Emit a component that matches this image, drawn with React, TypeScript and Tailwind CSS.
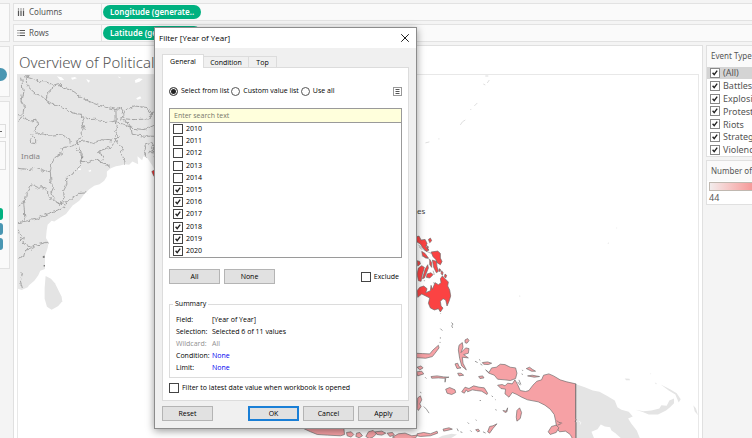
import React, { useState } from 'react';
import { X } from 'lucide-react';

const eventTypes = ['(All)', 'Battles', 'Explosi', 'Protest', 'Riots', 'Strateg', 'Violenc'];

const years = ['2010', '2011', '2012', '2013', '2014', '2015', '2016', '2017', '2018', '2019', '2020'];

const summary = [
  { label: 'Field:', value: '[Year of Year]', color: '' },
  { label: 'Selection:', value: 'Selected 6 of 11 values', color: '' },
  { label: 'Wildcard:', value: 'All', color: 'text-[#909090]', muted: true },
  { label: 'Condition:', value: 'None', color: 'text-[#0000f0]' },
  { label: 'Limit:', value: 'None', color: 'text-[#0000f0]' },
];

type CheckProps = {
  label: string;
  checked?: boolean;
  className?: string;
  box?: string;
  onChange?: () => void;
};

const Check = ({ label, checked = false, className = '', box = 'border-[#444]', onChange = () => {} }: CheckProps) => (
  <label className={`flex items-center gap-[3px] whitespace-nowrap ${className}`}>
    <span className="grid shrink-0">
      <input
        type="checkbox"
        checked={checked}
        onChange={onChange}
        className={`col-start-1 row-start-1 size-[10px] appearance-none border bg-white ${box}`}
      />
      {checked && (
        <svg viewBox="0 0 10 10" className="pointer-events-none col-start-1 row-start-1 size-[10px]" fill="none" stroke="#222" strokeWidth="1.4">
          <path d="M2.6 4.8 L4.2 6.6 L7.2 2.6" />
        </svg>
      )}
    </span>
    {label}
  </label>
);

const DialogButton = ({ children, primary = false }: { children: React.ReactNode; primary?: boolean }) => (
  <button
    className={`h-[15px] w-[51px] bg-[#e1e1e1] leading-none ${primary ? 'border-2 border-[#1a7fd6]' : 'border border-[#b4b4b4]'}`}
  >
    {children}
  </button>
);

const Shelf = ({ name, pill, icon }: { name: string; pill: string; icon: React.ReactNode }) => (
  <div className="flex h-[18px] items-center border border-r-0 border-[#e2e2e2] bg-[#fafafa]">
    <div className="flex h-full w-[88px] shrink-0 items-center gap-1 border-r border-[#e2e2e2] pl-[3px] text-[8px] text-[#555]">
      {icon}
      {name}
    </div>
    <span className="ml-px flex h-[14px] w-[98px] items-center rounded-full bg-[#00b180] pl-[7px] text-[8px] font-semibold whitespace-nowrap text-white">
      {pill}
    </span>
  </div>
);

const WorldMap = () => (
  <svg viewBox="17 74 681 364" className="block h-auto w-full">
    <defs>
      <filter id="jagged" x="-5%" y="-5%" width="110%" height="110%" colorInterpolationFilters="sRGB">
        <feTurbulence type="fractalNoise" baseFrequency="0.08" numOctaves="2" seed="4" />
        <feDisplacementMap in="SourceGraphic" scale="14" xChannelSelector="R" yChannelSelector="G" />
      </filter>
    </defs>

    {/* South Asia */}
    <g transform="translate(0 50) scale(0.33333)">
      <path
        fill="#e6e6e6"
        d="M51 72H480V360L463 362 455 345 440 322 428 316 424 328 410 316 412 340 395 332 385 342 372 340 358 344 345 346 330 352 318 362 318 376 310 390 296 400 280 405 265 415 250 430 235 450 215 464 195 490 178 500 160 512 152 510 140 522 137 540 135 562 143 575 140 592 132 615 132 655 118 660 112 674 100 690 84 704 80 710 62 718 51 714Z"
      />
      <path fill="#e4e4e4" d="M134 676L150 684 162 698 172 718 182 738 184 752 172 766 152 777 138 768 131 744 131 712Z" />
      <g fill="#fff">
        <path d="M168 76l14 3 8 8-12 1zM210 80l12-2 6 4-14 4zM402 88l12-6 12 2-10 8-12 4zM406 142l12-6 4 6-12 4zM256 84l12 5-6 6zM232 353l8 0 0 4-8 1zM262 360l8-3 1 4-6 2zM352 76l10 6-8-2z" />
      </g>
      <g fill="none" stroke="#8a8a8a" strokeWidth="2.2" filter="url(#jagged)">
        <path d="M72 74L92 80 116 92 140 93 157 103 172 98 188 112 206 116 222 124 240 140 262 150 280 158 310 168 345 175 346 210 320 215 300 211 280 205 264 206 240 190 222 188 200 180 180 168 160 162 135 148 139 128 152 118 157 103" />
        <path d="M78 76L76 96 84 110 104 128 120 134 135 148" />
        <path d="M62 80L66 120 60 150 70 165 66 190 74 204 90 210 108 208 110 226 100 242 104 250 120 248 150 256 184 252 206 264 210 286" />
        <path d="M92 250L104 264 104 278 92 276 90 262" />
        <path d="M240 190L250 204 244 216 250 234 240 246 246 258 226 268 230 278" />
        <path d="M228 274L250 270 278 278 300 266 330 270 344 256" />
        <path d="M346 176L360 170 366 180 360 206 382 216 390 228" />
        <path d="M366 196L376 176 400 165 440 170 452 186 448 204 400 206 372 204Z" />
        <path d="M346 210L350 232 340 240 352 258 344 266 356 280 366 290 360 306 368 322 370 342" />
        <path d="M350 214L390 228 394 250 430 256 462 256M392 232L430 236 446 230 462 222M450 190L464 184" />
        <path d="M210 286L180 292 186 304 160 322 152 340 148 362 150 390 158 410 150 426 164 448 176 460 190 440 188 420 198 400 196 380 216 366 232 352 244 330 240 310 226 292" />
        <path d="M51 352L80 356 104 352 130 362 148 358" />
        <path d="M210 286L228 276 244 310 240 330 262 336 284 326 300 334 316 340 330 352" />
        <path d="M300 334L308 316 290 302 330 288 346 270" />
        <path d="M176 460L200 452 214 440 232 428 256 426M51 470L66 452 74 446 76 428 92 402 112 412 134 410 146 440 160 450 176 460" />
        <path d="M68 452L70 480 72 510M51 516L80 510 110 504 140 488 170 478 190 466 200 454" />
        <path d="M51 540L60 560 54 570 70 560 66 574 90 590 110 582 140 574M51 622L68 618 72 600 98 592M56 660L64 670 58 690 64 712" />
        <path d="M440 322L428 300 432 284 452 276 460 290 446 310M452 290L462 320M51 216L62 200 51 186" />
      </g>
      <path fill="#e33" stroke="#555" strokeWidth="1.5" d="M453 362l6-4 5 6 0 18-6-8z" />
      <path fill="#777" d="M125 617l5-3 2 6-6 2zM128 643l4 0 0 4-4 0z" />
    </g>

    {/* Philippines, Indonesia and Papua */}
    <g transform="translate(410 210) scale(0.33333)" stroke="#6b6b6b" strokeWidth="2" strokeLinejoin="round">
      <g fill="#fb4343">
        <path d="M16 78L26 76 32 88 44 86 50 98 46 108 56 118 48 122 36 110 30 100 20 94ZM54 86l6-4 4 8-6 6zM48 104l6 4-2 8z" />
        <path d="M62 124L82 121 90 128 90 142 95 152 90 162 80 156 76 146 68 138ZM66 148L78 152 80 168 84 182 78 186 70 170ZM34 122l10 6 10 14-8 0-10-8z" />
        <path d="M20 150l8 2 2 8-8 6zM24 172L34 165 42 170 36 190 32 212 24 210 20 190ZM44 176L52 162 54 172 42 202 36 204ZM50 190L62 186 68 192 58 202 48 200Z" />
        <path d="M94 180l4 6-2 8-4-6zM104 190l5 4-3 8-4-4zM58 146l6 10 0 14-6-8zM86 174l4 2 0 6-4 0z" />
        <path d="M20 240L28 230 40 226 50 234 46 246 60 240 62 224 66 236 74 216 84 222 92 216 90 204 96 196 104 204 114 214 112 226 118 238 121 256 116 272 110 286 106 268 98 264 90 272 92 286 98 292 90 304 84 294 72 298 60 292 54 278 58 262 46 256 34 250 22 260Z" />
      </g>
      <path fill="none" strokeWidth="1.5" d="M24 102L40 118 62 128M34 136l12 4 12 6M26 108l8 8M70 214l2 6M40 210l4 0M90 308l2 2M68 180l4 12" />

      <g fill="#f6a1a5">
        <path d="M14 428L36 429 58 430 68 418 84 404 86 412 74 428 66 438 46 443 14 441Z" />
        <path d="M164 388l8-4 4 6-6 8-6-2zM144 418L146 404 156 396 158 410 152 426 166 412 176 414 174 428 160 432 174 442 156 440 158 458 168 478 154 466 148 444Z" />
        <path d="M134 460l8-2 4 10 6 4-12 2zM142 488l10 0 8 6-14 2zM205 498l12-2 4 6-12 2zM216 456l16-2 12 4-10 4-14-1z" />
        <path d="M20 470l12-4 6 6-10 6zM18 484l16-2 6 8-18 6zM62 498L80 496 100 499 116 500 100 503 84 502 64 503ZM104 503l0 12 2-10z" />
        <path d="M106 536L118 531 134 538 136 546 124 552 110 548ZM154 544L164 530 176 534 190 526 206 530 222 532 232 548 230 552 214 542 198 540 186 538 172 544 168 538 162 548Z" />
        <path d="M226 478L236 486 244 472 258 470 270 461 284 462 300 470 316 472 320 488 316 504 300 510 284 508 262 506 252 494 236 488Z" />
        <path d="M262 524L276 522 284 526 292 518 306 520 314 508 322 522 330 540 346 543 356 540 368 524 380 512 394 508 400 494 416 490 430 496 450 508 470 514 497 520V690H490L480 672 466 662 448 664 440 654 436 630 432 612 420 596 404 584 384 574 352 568 334 560 320 552 306 546 296 560 284 550 286 536 272 534Z" />
        <path d="M414 664L424 648 438 644 446 652 438 666 420 672ZM318 620L320 600 328 592 334 606 330 624 320 632ZM348 474L358 470 366 476 376 482 364 482ZM352 496L366 494 388 498 372 500Z" />
        <path d="M22 562l8-6 4 12-6 12 4 8-8 12-4-6zM232 664L238 648 248 646 260 640 248 654 238 668ZM98 656L116 652 126 656 110 660 100 662ZM278 600l10 2 4-10-2 12-6 2z" />
        <path d="M20 670L40 666 60 670 80 662 82 668 60 676 30 678 20 676ZM196 658l8-2 4 6-6 2z" />
        {/* Java and the Lesser Sunda Islands */}
        <path d="M-330 650L-290 654 -250 654 -200 654 -198 672 -210 676 -250 674 -280 672 -300 664Z" />
        <path d="M-192 666l14-2 8 8-8 8-12-4zM-162 668l10-2 8 10-10 6-10-4zM-134 678l8-14 14-4 10 10-10 10-12 4zM-106 664l20-2 12 6-12 6-14-2zM-70 668l16-2 6 8-14 4zM-54 680L-36 670 -16 668 4 676 20 674 16 682 -10 686 -40 686Z" />
      </g>
      <path
        fill="none"
        strokeWidth="2"
        d="M123 336l5 4-4 6 3 6M90 354l6 6M90 380v4M89 394v3M194 452l8 4M206 446l4 4M210 460l6 4M336 478l2 3M334 490l4 2M40 588l8 8 8 12M44 500l4 4M30 544l2 4M140 654l4 8M150 664l6 2M172 636l4 4M180 660l4 4M208 570l4 0M244 556l4 3M256 596l2 4M196 628l3 2M254 566l2 2M218 664l8 4M440 630l6 6 10 2M326 508l6 14M322 514l8 10M442 644l10-4"
      />
      <path strokeWidth="2.5" d="M497 520V625L499 628 495 632 498 636V690" fill="none" />

      <g fill="#e4e4e4" stroke="none">
        <path d="M500 522L524 530 548 540 568 544 590 556 614 570 622 590 634 598 656 604 668 618 654 624 664 640 680 660 692 690H640L616 668 604 660 600 650 584 648 572 642 562 656 544 664 552 684 540 690H500Z" />
        <path d="M676 598L700 602 724 600 748 594 754 584 770 586 778 570 792 564 792 578 780 590 768 600 744 612 716 612 696 604Z" />
        <path d="M752 522L780 536 800 548 812 566 806 576 796 552 776 540ZM644 504l14 1 2 4-12 0zM734 516l6 2-2 4zM720 488l4 2-3 1zM850 584l8 10 6 20-10-12z" />
        <path d="M80 684l16-8 28-6 16 2-16 10-12 4z" />
        <path d="M592 98l5-4-2 6zM618 50l4 2-4 1zM327 254l4 2-3 4z" />
      </g>
      <path fill="none" stroke="#fff" d="M506 632l6 4-2 6" />
    </g>

    {/* Small islands south of Japan */}
    <path fill="none" stroke="#dedede" d="M485 75l3 0M487 82l2-3M483 83l2 1M474 105l3-3M471 108l-1 1M460 124l2-3 3-2M425 142l4-1M438 138l1 0" />

    <text x="20" y="158" className="fill-[#858585] font-['Noto_Sans'] text-[8px]">India</text>
    <text x="425" y="213" textAnchor="end" className="fill-[#444] font-['Noto_Sans'] text-[8px]">Philippines</text>
  </svg>
);

const FilterDialog = () => {
  const [selected, setSelected] = useState(years.slice(5));
  const [mode, setMode] = useState('Select from list');

  const toggle = (year: string) =>
    setSelected(selected.includes(year) ? selected.filter((y) => y !== year) : [...selected, year]);

  return (
    <div
      role="dialog"
      aria-label="Filter [Year of Year]"
      className="absolute top-[27px] left-[154px] flex w-[263px] flex-col border border-[#8c8c8c] bg-[#f0f0f0] font-['Open_Sans',sans-serif] text-[7px] leading-[12px] font-medium text-black shadow-[0_2px_8px_rgba(0,0,0,0.4)]"
    >
      <div className="flex h-[20px] items-center justify-between bg-white pr-1 pl-1 text-[8px] font-normal">
        Filter [Year of Year]
        <button aria-label="Close">
          <X size={14} strokeWidth={1.5} />
        </button>
      </div>

      <div className="px-[7px] pt-[7px]">
        <div role="tablist" className="flex h-[12px] items-end">
          <button role="tab" aria-selected="true" className="z-10 -mb-px h-[14px] w-[42px] border border-b-0 border-[#dcdcdc] bg-white leading-none">General</button>
          <button role="tab" aria-selected="false" className="h-[11px] w-[45px] border border-b-0 border-l-0 border-[#dcdcdc] leading-none">Condition</button>
          <button role="tab" aria-selected="false" className="h-[11px] w-[28px] border border-b-0 border-l-0 border-[#dcdcdc] leading-none">Top</button>
        </div>

        <div className="flex flex-col border border-[#dcdcdc] bg-white px-[6px] pt-[17px] pb-[6px]">
          <div className="flex h-[12px] items-center gap-[2px]">
            {['Select from list', 'Custom value list', 'Use all'].map((name) => (
              <label key={name} className="flex items-center gap-[3px] whitespace-nowrap">
                <input
                  type="radio"
                  name="mode"
                  checked={mode === name}
                  onChange={() => setMode(name)}
                  className="size-[9px] appearance-none rounded-full border border-[#555] bg-white checked:bg-[#222] checked:shadow-[inset_0_0_0_1px_white]"
                />
                {name}
              </label>
            ))}
            <button aria-label="List options" className="ml-auto border border-[#999] bg-white">
              <svg viewBox="0 0 7 7" className="size-[7px]" stroke="#555">
                <path d="M1.500 1.500H5.500M1.500 3.500H5.500M1.500 5.500H5.500" />
              </svg>
            </button>
          </div>

          <input
            type="text"
            aria-label="Search"
            placeholder="Enter search text"
            className="mt-[11px] h-[15px] border border-[#9a9a9a] bg-[#ffffdc] px-1 placeholder:text-[#77776a]"
          />
          <div className="flex h-[135px] flex-col justify-between border border-t-0 border-[#9a9a9a] pl-[3px]">
            {years.map((year) => (
              <Check key={year} label={year} checked={selected.includes(year)} onChange={() => toggle(year)} />
            ))}
          </div>

          <div className="mt-[11px] flex items-center gap-1">
            <DialogButton>All</DialogButton>
            <DialogButton>None</DialogButton>
            <Check label="Exclude" className="ml-auto pr-[3px]" />
          </div>

          <fieldset className="mt-[14px] border border-[#dcdcdc] px-[6px] pb-[3px]">
            <legend className="-ml-[3px] px-[2px]">Summary</legend>
            <dl className="grid grid-cols-[36px_1fr] pt-1">
              {summary.map((row) => (
                <React.Fragment key={row.label}>
                  <dt className={row.muted ? 'text-[#909090]' : ''}>{row.label}</dt>
                  <dd className={row.color}>{row.value}</dd>
                </React.Fragment>
              ))}
            </dl>
          </fieldset>

          <Check label="Filter to latest date value when workbook is opened" className="mt-1" />
        </div>
      </div>

      <div className="flex gap-1 px-[7px] pt-[5px] pb-[7px]">
        <DialogButton>Reset</DialogButton>
        <div className="ml-auto flex gap-1">
          <DialogButton primary>OK</DialogButton>
          <DialogButton>Cancel</DialogButton>
          <DialogButton>Apply</DialogButton>
        </div>
      </div>
    </div>
  );
};

const App = () => {
  return (
    <div className="relative flex min-h-screen overflow-hidden bg-[#f4f4f4] pt-[3px] font-['Noto_Sans',sans-serif] text-[#555]">
      {/* Edge of the pages / filters / marks cards */}
      <aside className="mr-[3px] flex w-[10px] shrink-0 flex-col gap-1 overflow-hidden">
        <div className="h-[39px] border border-l-0 border-[#e2e2e2] bg-[#fafafa]"></div>
        <div className="flex h-[51px] items-center border border-l-0 border-[#e2e2e2] bg-[#fafafa] pt-[5px]">
          <div className="h-[13px] w-[7px] rounded-r-full bg-[#4996b2]"></div>
        </div>
        <div className="flex h-[168px] flex-col border border-l-0 border-[#e2e2e2] bg-[#fafafa] pt-[22px]">
          <div className="flex h-[14px] w-[6px] items-center border border-l-0 border-[#dedede]">
            <div className="h-px w-[2px] bg-[#666]"></div>
          </div>
          <div className="mt-[3px] h-[29px] w-[6px] border border-l-0 border-[#dedede]"></div>
          <div className="mt-[38px] flex flex-col gap-[3px]">
            <div className="h-3 w-[3px] rounded-r-full bg-[#00b180]"></div>
            <div className="h-3 w-[3px] rounded-r-full bg-[#4996b2]"></div>
            <div className="h-3 w-[3px] rounded-r-full bg-[#4996b2]"></div>
          </div>
        </div>
      </aside>

      <main className="flex min-w-0 flex-1 flex-col">
        <div className="flex flex-col gap-[3px]">
          <Shelf
            name="Columns"
            pill="Longitude (generate.."
            icon={
              <svg viewBox="0 0 8 8" className="size-[8px]" stroke="#555" strokeWidth="1.2">
                <path d="M1.500 2.500V8M4 2.500V8M6.500 2.500V8M1.500 0.500V1.500M4 0.500V1.500M6.500 0.500V1.500" />
              </svg>
            }
          />
          <Shelf
            name="Rows"
            pill="Latitude (generate.."
            icon={
              <svg viewBox="0 0 8 8" className="size-[8px]" stroke="#555" strokeWidth="1.2">
                <path d="M2.500 1.500H8M2.500 4H8M2.500 6.500H8M0.500 1.500H1.500M0.500 4H1.500M0.500 6.500H1.500" />
              </svg>
            }
          />
        </div>

        <div className="mt-[3px] flex flex-1">
          <section className="min-w-0 flex-1 border border-b-0 border-[#e0e0e0] bg-white px-[3px]">
            <h1 className="flex h-[28px] items-center pt-1 pl-[2px] text-[15px] font-light whitespace-nowrap text-[#555]">Overview of Political</h1>
            <div className="border-x border-t border-[#e8e8e8]">
              <WorldMap />
            </div>
          </section>

          <aside className="ml-[3px] flex w-[46px] shrink-0 flex-col gap-[3px] overflow-hidden text-[8px]">
            <div className="border border-r-0 border-[#e0e0e0] bg-white">
              <h2 className="h-[21px] bg-[#fafafa] pl-1 leading-[20px] whitespace-nowrap">Event Type</h2>
              <div className="flex h-[89px] flex-col justify-between text-[9px]">
                {eventTypes.map((type, index) => (
                  <Check
                    key={type}
                    label={type}
                    checked
                    box="border-[#888]"
                    className={`h-[12px] pl-[3px] ${index === 0 ? 'bg-[#d4d4d4]' : ''}`}
                  />
                ))}
              </div>
            </div>
            <div className="border border-r-0 border-[#e0e0e0] bg-white">
              <h2 className="h-[20px] bg-[#fafafa] pl-1 leading-[20px] whitespace-nowrap">Number of</h2>
              <div className="mt-px ml-[2px] h-[9px] border border-r-0 border-[#c0b8b0] bg-linear-to-r from-[#f2ecec] to-[#f59a9a]"></div>
              <div className="pl-[2px] text-[9px] leading-[13px]">44</div>
            </div>
          </aside>
        </div>
      </main>

      <FilterDialog />
    </div>
  );
};

export default App;
